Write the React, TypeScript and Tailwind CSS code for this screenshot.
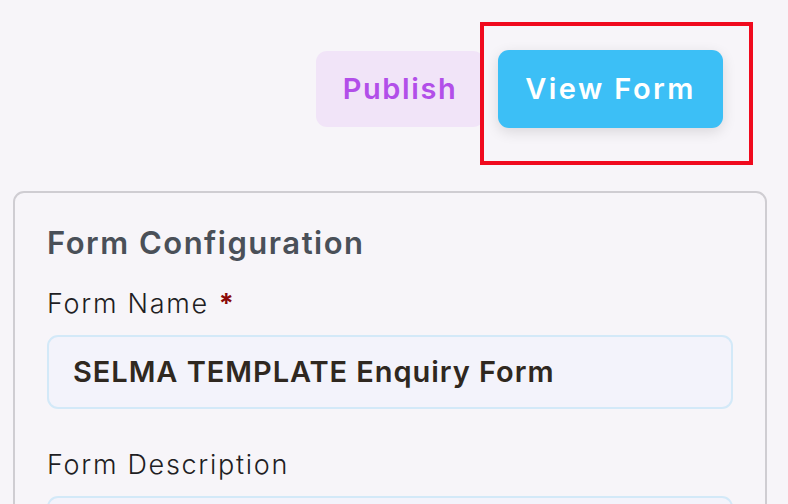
const font = { fontFamily: "Inter, 'Noto Sans', sans-serif" };

function Field({
  label,
  required,
  value,
}: {
  label: string;
  required?: boolean;
  value?: string;
}) {
  return (
    <div>
      <label className="block text-[27px] leading-[34px] font-light text-[#1f1e24] tracking-[1.7px]">
        {label}
        {required && <span className="ml-[10px] text-[#8b0a0a] font-bold">*</span>}
      </label>
      <div className="mt-[14px] flex h-[74px] items-center rounded-[11px] border-2 border-[#d3e9f8] bg-[#f3f3fb] px-[24px]">
        <span className="text-[29px] font-semibold text-[#2f2820] tracking-[0.95px]">
          {value}
        </span>
      </div>
    </div>
  );
}

export default function App() {
  return (
    <div
      className="h-[504px] w-[788px] overflow-hidden bg-[#f7f5f9]"
      style={font}
    >
      <div className="flex justify-end gap-[14px] pr-[65px] pt-[50px]">
        <button
          type="button"
          className="mt-[1px] h-[76px] w-[168px] rounded-[11px] bg-[#f1e4f8] text-[29px] font-semibold text-[#b24fe9] tracking-[1.6px]"
        >
          Publish
        </button>
        <div className="relative">
          <button
            type="button"
            className="h-[78px] w-[225px] rounded-[11px] bg-[#3cbff6] text-[29px] font-semibold text-white tracking-[2.4px] shadow-[0_4px_14px_rgba(0,0,0,0.12)]"
          >
            View Form
          </button>
          <div className="pointer-events-none absolute -top-[28px] -bottom-[37px] -left-[18px] -right-[30px] border-4 border-[#f00a1e]" />
        </div>
      </div>
      <div className="ml-[13px] mr-[21px] mt-[63px] rounded-[11px] border-2 border-[#cfcdd2] px-[32px] pt-[30px] pb-8">
        <h2 className="text-[31px] font-semibold leading-[40px] text-[#4a5058] tracking-[1.5px]">
          Form Configuration
        </h2>
        <div className="mt-[24px] flex flex-col gap-[39px]">
          <Field label="Form Name" required value="SELMA TEMPLATE Enquiry Form" />
          <Field label="Form Description" />
        </div>
      </div>
    </div>
  );
}
